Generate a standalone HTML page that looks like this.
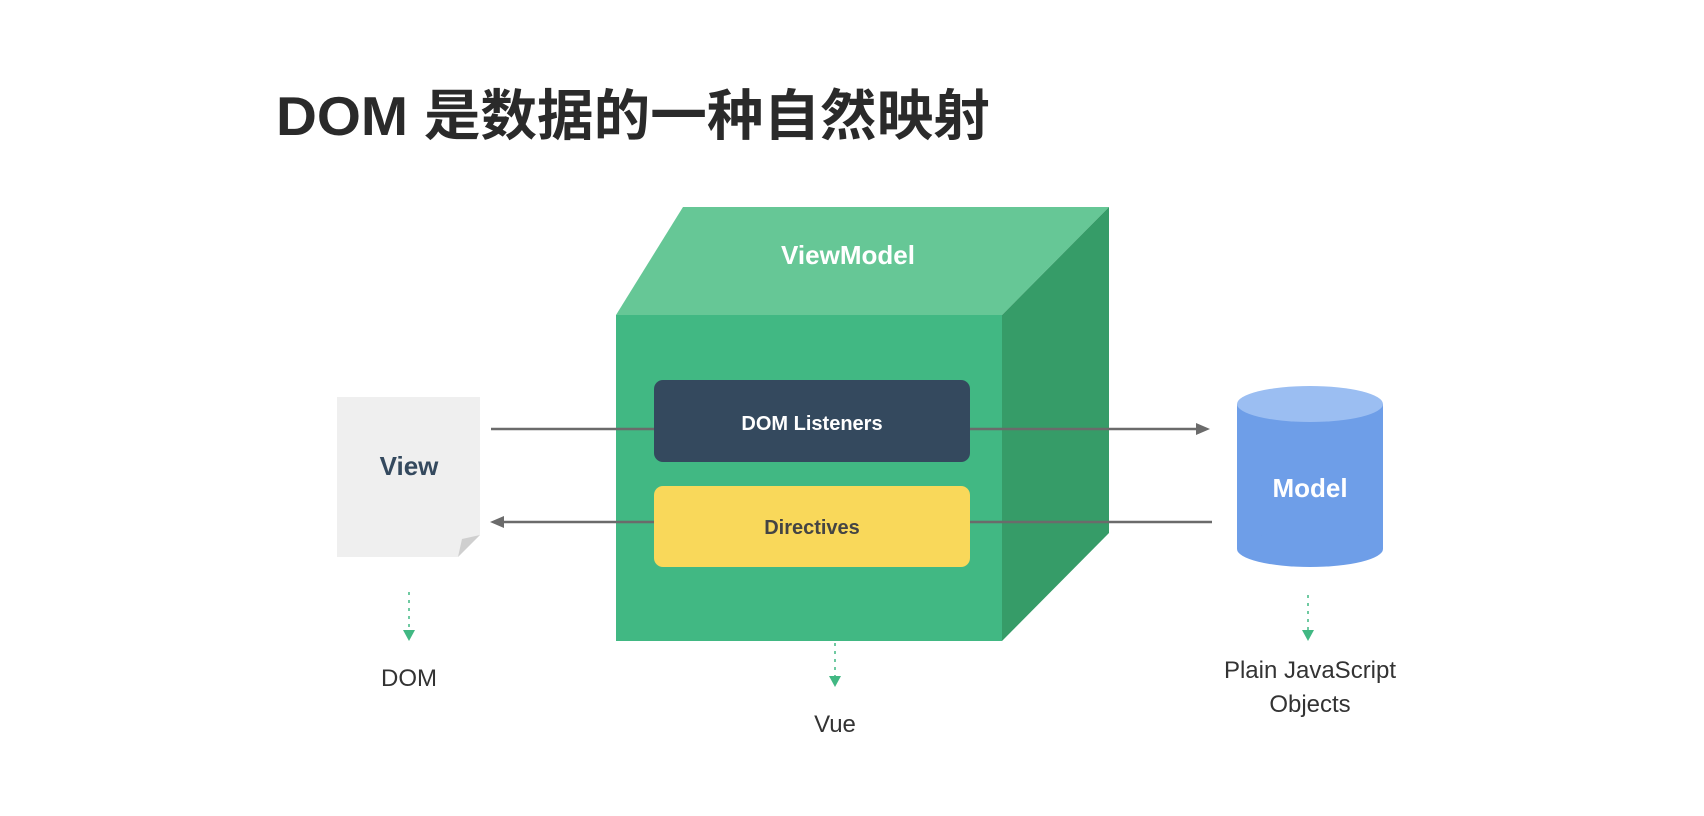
<!DOCTYPE html>
<html><head><meta charset="utf-8"><style>
body{margin:0;width:1704px;height:816px;background:#fff;overflow:hidden;font-family:"Liberation Sans","Noto Sans CJK SC",sans-serif}
</style></head><body>
<svg width="1704" height="816" viewBox="0 0 1704 816" style="position:absolute;left:0;top:0">
<text x="276" y="135" font-size="55" font-weight="bold" fill="#2a2a2a" textLength="714" lengthAdjust="spacingAndGlyphs" font-family="Liberation Sans, Noto Sans CJK SC, sans-serif">DOM 是数据的一种自然映射</text>
<!-- cube -->
<polygon points="616,315 683,207 1109,207 1002,315" fill="#66c796"/>
<polygon points="1002,315 1109,207 1109,533 1002,641" fill="#369c68"/>
<rect x="616" y="315" width="386" height="326" fill="#41b883"/>
<text x="848" y="264" font-size="26" font-weight="bold" fill="#fff" text-anchor="middle">ViewModel</text>
<!-- arrows -->
<line x1="491" y1="429" x2="1198" y2="429" stroke="#6b6b6b" stroke-width="2.5"/>
<polygon points="1210,429 1196,423 1196,435" fill="#6b6b6b"/>
<line x1="503" y1="522" x2="1212" y2="522" stroke="#6b6b6b" stroke-width="2.5"/>
<polygon points="490,522 504,516 504,528" fill="#6b6b6b"/>
<rect x="654" y="380" width="316" height="82" rx="9" fill="#34495e"/>
<text x="812" y="430" font-size="20" font-weight="bold" fill="#fff" text-anchor="middle">DOM Listeners</text>
<rect x="654" y="486" width="316" height="81" rx="9" fill="#f9d85a"/>
<text x="812" y="534" font-size="20" font-weight="bold" fill="#444" text-anchor="middle">Directives</text>
<!-- view doc -->
<polygon points="337,397 480,397 480,535 458,557 337,557" fill="#efefef"/>
<polygon points="458,557 480,535 462,539" fill="#cfcfcf"/>
<text x="409" y="475" font-size="26" font-weight="bold" fill="#34495e" text-anchor="middle">View</text>
<!-- model -->
<rect x="1237" y="404" width="146" height="145" fill="#6e9ee8"/>
<ellipse cx="1310" cy="549" rx="73" ry="18" fill="#6e9ee8"/>
<ellipse cx="1310" cy="404" rx="73" ry="18" fill="#9bbef2"/>
<text x="1310" y="497" font-size="26" font-weight="bold" fill="#fff" text-anchor="middle">Model</text>
<!-- dotted -->
<g stroke="#41b883" stroke-width="1.5" stroke-dasharray="3,5">
<line x1="409" y1="592" x2="409" y2="630"/><line x1="835" y1="643" x2="835" y2="676"/><line x1="1308" y1="595" x2="1308" y2="630"/></g>
<g fill="#41b883"><polygon points="403,630 415,630 409,641"/><polygon points="829,676 841,676 835,687"/><polygon points="1302,630 1314,630 1308,641"/></g>
<g font-size="24" fill="#333" text-anchor="middle">
<text x="409" y="686">DOM</text><text x="835" y="732">Vue</text>
<text x="1310" y="678">Plain JavaScript</text><text x="1310" y="712">Objects</text></g>
</svg>
</body></html>
